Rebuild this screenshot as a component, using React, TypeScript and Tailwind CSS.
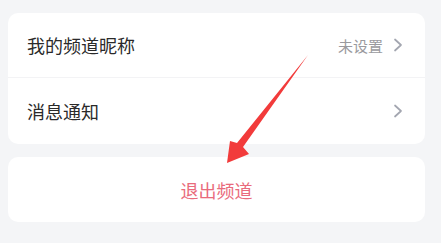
import React from "react";

function Chevron() {
  return (
    <svg width="10" height="14" viewBox="0 0 10 14" fill="none">
      <path d="M2 1.5L8 7L2 12.5" stroke="#a3a6b0" strokeWidth="1.7" strokeLinecap="round" strokeLinejoin="round" />
    </svg>
  );
}

export default function App() {
  return (
    <div
      className="relative w-[441px] h-[243px] bg-[#f4f5f7] pt-[13px] pl-[8px] pr-[16px]"
      style={{ fontFamily: '"Noto Sans CJK SC", "Noto Sans", sans-serif' }}
    >
      <div className="bg-white rounded-[10px] overflow-hidden">
        <div className="h-[65px] flex items-center pl-[19px] pr-[22px] border-b border-[#f3f3f5]">
          <span className="text-[18px] text-[#2a2a2a] leading-none">我的频道昵称</span>
          <span className="ml-auto text-[15px] text-[#9a9a9e] leading-none mr-[10px]">未设置</span>
          <Chevron />
        </div>
        <div className="h-[66px] flex items-center pl-[19px] pr-[22px]">
          <span className="text-[18px] text-[#2a2a2a] leading-none">消息通知</span>
          <span className="ml-auto" />
          <Chevron />
        </div>
      </div>
      <div className="mt-[13px] h-[65px] bg-white rounded-[10px] flex items-center justify-center">
        <span className="text-[18px] text-[#e96b7c] leading-none">退出频道</span>
      </div>
      <svg className="absolute left-0 top-0 pointer-events-none" width="441" height="243" viewBox="0 0 441 243">
        <polygon
          points="308,55 243,147 249,154 227,163 230,141 237,143"
          fill="#f23b3b"
        />
      </svg>
    </div>
  );
}
